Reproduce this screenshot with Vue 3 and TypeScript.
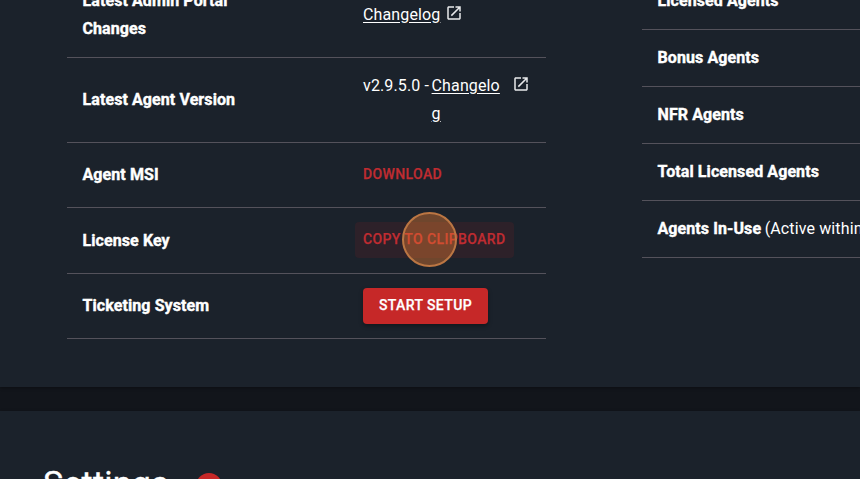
<script setup lang="ts">
const licenseRows: string[] = ['Licensed Agents', 'Bonus Agents', 'NFR Agents', 'Total Licensed Agents']
const iconPath =
  'M19 19H5V5h7V3H5c-1.11 0-2 .9-2 2v14c0 1.1.89 2 2 2h14c1.1 0 2-.9 2-2v-7h-2v7zM14 3v2h3.59l-9.83 9.83 1.41 1.41L19 6.41V10h2V3h-7z'
</script>

<template>
  <main class="page">
    <section class="card overview">
      <div class="table details">
        <div class="row tall">
          <div class="label">Latest Admin Portal<br />Changes</div>
          <div class="value">
            <a class="link">Changelog</a>
            <svg class="icon near" viewBox="0 0 24 24"><path :d="iconPath" /></svg>
          </div>
        </div>
        <div class="row tall">
          <div class="label">Latest Agent Version</div>
          <div class="value top">
            <span class="version">v2.9.5.0 -</span>
            <a class="link wrap">Changelog</a>
            <svg class="icon far" viewBox="0 0 24 24"><path :d="iconPath" /></svg>
          </div>
        </div>
        <div class="row action">
          <div class="label">Agent MSI</div>
          <div class="value"><button class="btn text">Download</button></div>
        </div>
        <div class="row action key">
          <div class="label">License Key</div>
          <div class="value">
            <button class="btn text hover">Copy to Clipboard<span class="pointer"></span></button>
          </div>
        </div>
        <div class="row action">
          <div class="label">Ticketing System</div>
          <div class="value"><button class="btn filled">Start Setup</button></div>
        </div>
      </div>
      <div class="table licenses">
        <div v-for="name in licenseRows" :key="name" class="row">
          <div class="label">{{ name }}</div>
        </div>
        <div class="row">
          <div class="label">Agents In-Use</div>
          <span class="note">(Active within</span>
        </div>
      </div>
    </section>
    <section class="card settings">
      <h2>Settings</h2>
      <span class="badge"></span>
    </section>
  </main>
</template>

<style>
body {
  margin: 0;
  background: #12151b;
}
</style>

<style scoped>
.page {
  display: flex;
  flex-direction: column;
  gap: 24px;
  width: 860px;
  height: 479px;
  overflow: hidden;
  background: #12151b;
  color: #fff;
  font-family: Roboto, sans-serif;
  font-size: 16px;
  line-height: 28px;
  letter-spacing: 0.13px;
}
.card {
  box-sizing: border-box;
  background: #1b222b;
  flex: none;
  overflow: hidden;
  box-shadow: 0 1px 3px rgba(0, 0, 0, 0.35);
}
.overview {
  display: flex;
  gap: 96px;
  height: 387px;
  padding-left: 67px;
}
.table {
  flex: none;
  width: 479px;
  margin-top: -27px;
}
.row {
  box-sizing: border-box;
  display: flex;
  align-items: center;
  height: 57px;
  padding: 0 15.5px;
  border-bottom: 1px solid #54525b;
  white-space: nowrap;
}
.row.tall {
  height: 85px;
}
.row.action {
  height: 65px;
}
.row.action.key {
  height: 66px;
}
.label {
  font-weight: 700;
  letter-spacing: 0.09px;
  -webkit-text-stroke: 0.4px #fff;
}
.details .label {
  width: 280.5px;
  flex: none;
}
.value {
  display: flex;
  align-items: center;
}
.value.top {
  align-items: flex-start;
}
.link {
  text-decoration: underline;
  text-underline-offset: 2px;
}
.wrap {
  width: 69px;
  margin-left: 2.5px;
  white-space: normal;
  word-break: break-all;
}
.icon {
  width: 18px;
  height: 18px;
  fill: #e9eaec;
}
.near {
  margin: -4px 0 0 5px;
}
.far {
  margin: 3px 0 0 11.5px;
}
.note {
  margin-left: 3.5px;
}
.btn {
  position: relative;
  height: 36px;
  margin: 0;
  border: 0;
  border-radius: 4px;
  font-family: inherit;
  font-size: 14px;
  font-weight: 500;
  letter-spacing: 0.38px;
  line-height: 35px;
  text-transform: uppercase;
  white-space: nowrap;
  -webkit-text-stroke: 0.25px currentColor;
}
.text {
  margin-left: -8px;
  padding: 0 8px 1px;
  color: #bf2c31;
  background: transparent;
}
.hover {
  margin-top: -1px;
  background: #2d2129;
}
.filled {
  padding: 0 16px 1px;
  color: #fff;
  background: #c62828;
  box-shadow: 0 2px 4px rgba(0, 0, 0, 0.35);
}
.pointer {
  position: absolute;
  left: 47px;
  top: -10px;
  box-sizing: border-box;
  width: 55px;
  height: 55px;
  border: 2px solid #bb7643;
  border-radius: 50%;
  background: rgba(237, 126, 50, 0.4);
}
.settings {
  display: flex;
  align-items: flex-start;
  gap: 27px;
  height: 120px;
  padding: 52px 0 0 43px;
}
h2 {
  margin: 0;
  font-size: 34px;
  font-weight: 400;
  line-height: 40px;
  letter-spacing: 0.2px;
  -webkit-text-stroke: 0.3px #fff;
}
.badge {
  width: 26px;
  height: 26px;
  margin-top: 10px;
  border-radius: 50%;
  background: #c62828;
}
</style>
